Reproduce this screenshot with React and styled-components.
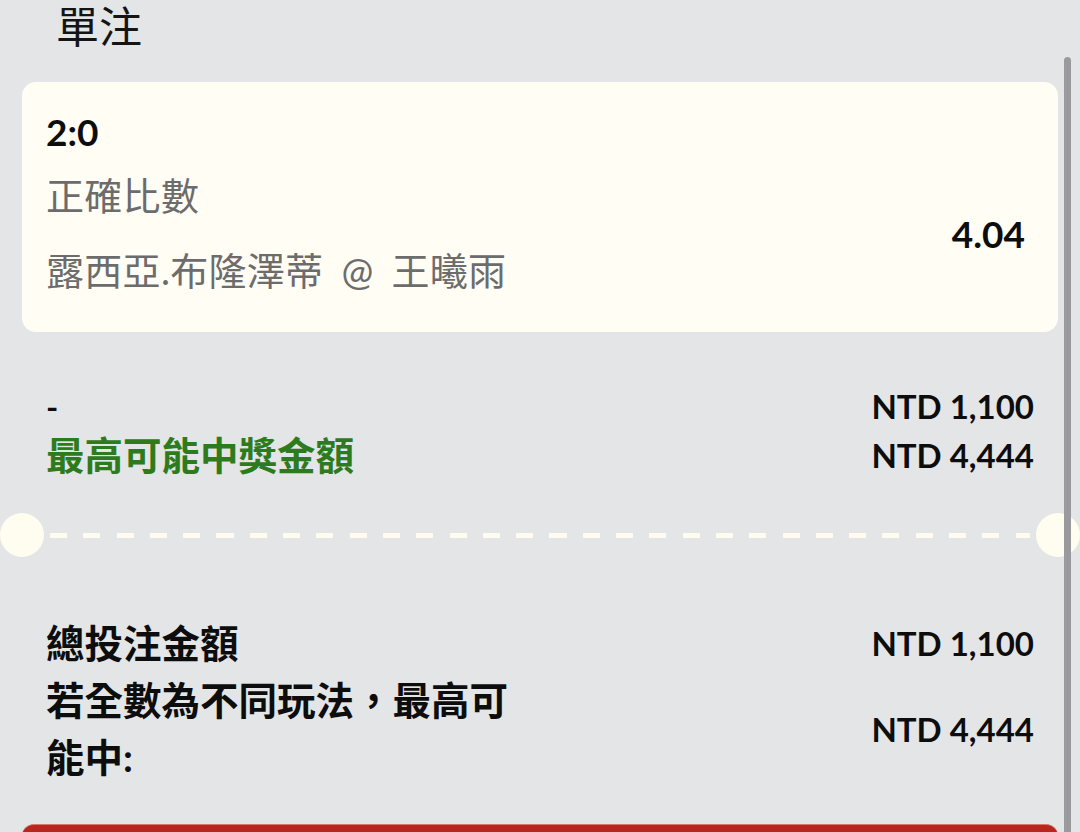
import React from "react";
import styled, { createGlobalStyle } from "styled-components";

const GlobalStyle = createGlobalStyle`
  html, body {
    margin: 0;
    padding: 0;
    overflow: hidden;
    background: #e4e5e7;
  }
  body {
    font-family: Lato, "Noto Sans CJK TC", sans-serif;
    color: #111;
  }
`;

// Page shell
const Page = styled.div`
  position: relative;
  width: 1080px;
  height: 832px;
  overflow: hidden;
`;

const Title = styled.h1`
  margin: 0;
  padding: 2px 0 0 56px;
  font-size: 43px;
  line-height: 50px;
  font-weight: 400;
  color: #141414;
`;

// Selection card
const Card = styled.div`
  margin: 30px 22px 0;
  padding: 28px 33px 24px 24px;
  background: #fffdf4;
  border-radius: 14px;
`;

const Score = styled.div`
  font-size: 37px;
  line-height: 44px;
  font-weight: 700;
  color: #0d0d0d;
`;

const CardBody = styled.div`
  margin-top: 4px;
  display: flex;
  align-items: center;
  justify-content: space-between;
`;

const Detail = styled.div`
  font-size: 38px;
  line-height: 75px;
  color: #6c6c6c;
  word-spacing: 8px;
  letter-spacing: 0.3px;
`;

const Odds = styled.div`
  font-size: 37px;
  font-weight: 700;
  color: #0d0d0d;
`;

// Amount rows
const Block = styled.div`
  padding: ${(p) => p.$top}px 46px 0;
`;

const Row = styled.div`
  display: flex;
  align-items: center;
  justify-content: space-between;
  line-height: ${(p) => p.$lh}px;
`;

const Label = styled.div`
  max-width: 480px;
  font-size: 38.5px;
  font-weight: 700;
  color: ${(p) => (p.$green ? "#2e7b1d" : "#0d0d0d")};
`;

const Dash = styled.div`
  font-size: 33px;
  font-weight: 700;
  color: #0d0d0d;
`;

const Amount = styled.div`
  font-size: 33px;
  font-weight: 700;
  color: #0d0d0d;
  white-space: nowrap;
`;

// Ticket-style divider
const Divider = styled.div`
  margin-top: 33px;
  display: flex;
  align-items: center;
  gap: 6px;
`;

const Notch = styled.div`
  width: 44px;
  height: 44px;
  border-radius: 50%;
  background: #fffdf0;
  flex-shrink: 0;
`;

const DashLine = styled.div`
  flex: 1;
  height: 5px;
  background: repeating-linear-gradient(
    to right,
    #fffbee 0 17px,
    transparent 17px 33.3px
  );
`;

const SubmitBar = styled.div`
  margin: 38px 22px 0;
  height: 60px;
  background: #b8261d;
  border-top: 1px solid #d8776c;
  border-radius: 12px 12px 0 0;
`;

const Scrollbar = styled.div`
  position: absolute;
  top: 57px;
  right: 9px;
  bottom: 0;
  width: 7px;
  border-radius: 4px 4px 0 0;
  background: #9a9a9e;
  z-index: 2;
`;

export default function App() {
  return (
    <Page>
      <GlobalStyle />
      <Title>單注</Title>

      <Card>
        <Score>2:0</Score>
        <CardBody>
          <div>
            <Detail>正確比數</Detail>
            <Detail>露西亞.布隆澤蒂 @ 王曦雨</Detail>
          </div>
          <Odds>4.04</Odds>
        </CardBody>
      </Card>

      <Block $top={50}>
        <Row $lh={49}>
          <Dash>-</Dash>
          <Amount>NTD 1,100</Amount>
        </Row>
        <Row $lh={49}>
          <Label $green>最高可能中獎金額</Label>
          <Amount>NTD 4,444</Amount>
        </Row>
      </Block>

      <Divider>
        <Notch />
        <DashLine />
        <Notch />
      </Divider>

      <Block $top={58}>
        <Row $lh={57}>
          <Label>總投注金額</Label>
          <Amount>NTD 1,100</Amount>
        </Row>
        <Row $lh={57}>
          <Label>若全數為不同玩法，最高可能中:</Label>
          <Amount>NTD 4,444</Amount>
        </Row>
      </Block>

      <SubmitBar />
      <Scrollbar />
    </Page>
  );
}
